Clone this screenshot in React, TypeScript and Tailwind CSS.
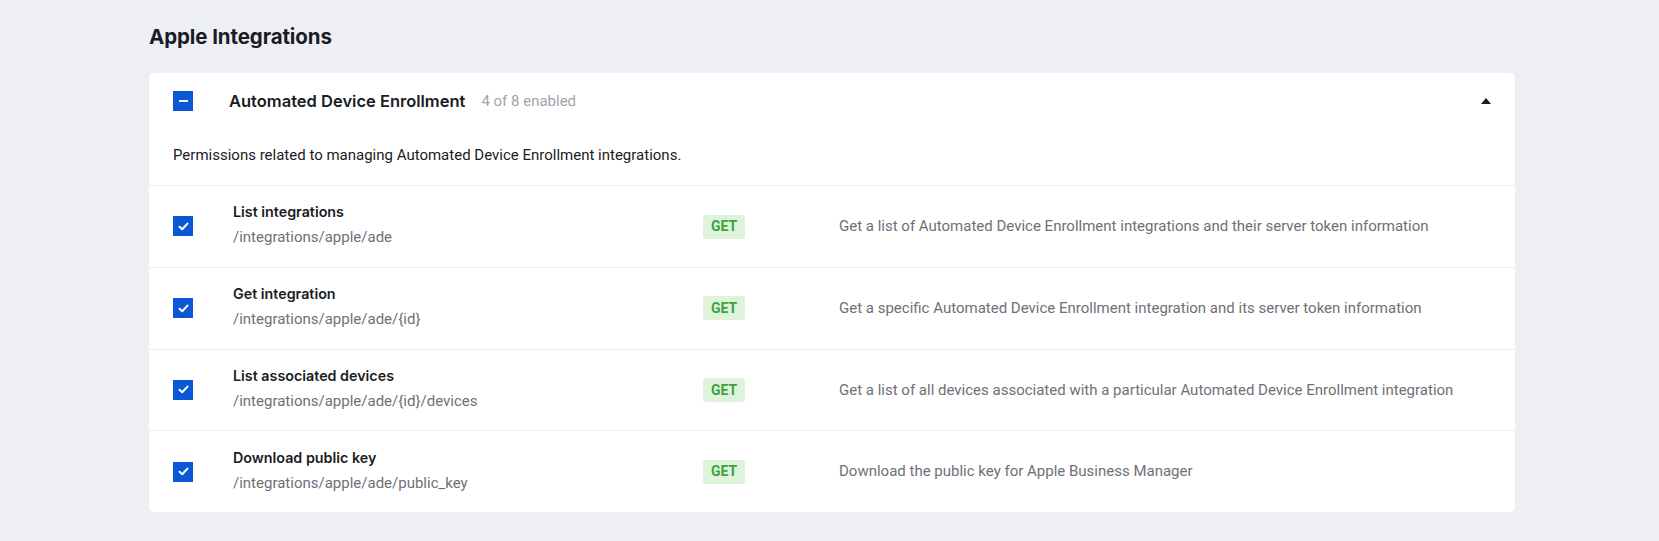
const perms = [
  {
    title: "List integrations",
    path: "/integrations/apple/ade",
    desc: "Get a list of Automated Device Enrollment integrations and their server token information",
  },
  {
    title: "Get integration",
    path: "/integrations/apple/ade/{id}",
    desc: "Get a specific Automated Device Enrollment integration and its server token information",
  },
  {
    title: "List associated devices",
    path: "/integrations/apple/ade/{id}/devices",
    desc: "Get a list of all devices associated with a particular Automated Device Enrollment integration",
  },
  {
    title: "Download public key",
    path: "/integrations/apple/ade/public_key",
    desc: "Download the public key for Apple Business Manager",
  },
];

const CheckBox = ({ partial }: { partial?: boolean }) => (
  <div className="w-5 h-5 flex-shrink-0 bg-[#0a58d6] flex items-center justify-center">
    {partial ? (
      <div className="w-[9px] h-[2px] bg-white" />
    ) : (
      <svg width="11" height="9" viewBox="0 0 11 9" fill="none">
        <path d="M1.5 4.8 L4.2 7.3 L9.5 1.6" stroke="white" strokeWidth="2" strokeLinecap="round" strokeLinejoin="round" />
      </svg>
    )}
  </div>
);

export default function App() {
  return (
    <div className="min-h-[541px] bg-[#eeeff4] pl-[149px] pt-[24px] pb-[28px] font-['Roboto',sans-serif]">
      <h2 className="font-['Inter',sans-serif] text-[20.5px] font-bold text-[#1b1b24] leading-[26px] tracking-[-0.1px]">
        Apple Integrations
      </h2>
      <div className="mt-[23px] w-[1366px] bg-white rounded-[5px]">
        <div className="px-6 pt-[18px]">
          <div className="flex items-center h-5">
            <CheckBox partial />
            <span className="ml-9 font-['Inter',sans-serif] text-[16.5px] font-semibold text-[#1b1b24]">
              Automated Device Enrollment
            </span>
            <span className="ml-[16px] text-[15px] text-[#a3a3ab]">4 of 8 enabled</span>
            <div className="ml-auto mr-0 w-0 h-0 border-l-[5px] border-r-[5px] border-b-[6px] border-l-transparent border-r-transparent border-b-[#1b1b24]" />
          </div>
          <p className="mt-[34px] pb-[20px] text-[15px] leading-[20px] text-[#1b1b24]">
            Permissions related to managing Automated Device Enrollment integrations.
          </p>
        </div>
        {perms.map((p) => (
          <div key={p.path} className="flex items-center h-[81.75px] px-6 border-t border-[#ececf0]">
            <CheckBox />
            <div className="ml-10 w-[470px] -mt-[3px]">
              <div className="font-['Inter',sans-serif] text-[14.3px] font-semibold text-[#1b1b24] leading-[20px]">
                {p.title}
              </div>
              <div className="mt-[5px] text-[15px] text-[#6f6f78] leading-[20px]">{p.path}</div>
            </div>
            <div className="w-[136px]">
              <span className="inline-flex items-center justify-center w-[42px] h-6 rounded-[3px] bg-[#dff3dc] text-[#3aa53a] text-[14px] font-bold">
                GET
              </span>
            </div>
            <div className="text-[15px] text-[#6f6f78]">{p.desc}</div>
          </div>
        ))}
      </div>
    </div>
  );
}
